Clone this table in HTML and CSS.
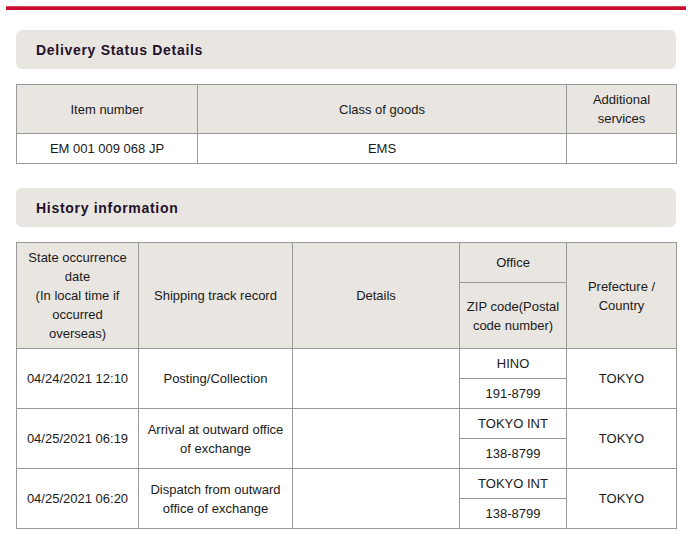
FILE: index.html
```html
<!DOCTYPE html>
<html lang="en">
<head>
<meta charset="utf-8">
<title>Delivery Status Details</title>
<link rel="stylesheet" href="styles.css">
</head>
<body>
<div class="topbar"></div>
<main class="content">
  <h2 class="section-title">Delivery Status Details</h2>
  <table class="grid grid-summary">
    <colgroup>
      <col class="s1"><col class="s2"><col class="s3">
    </colgroup>
    <tr class="h49">
      <th>Item number</th>
      <th>Class of goods</th>
      <th>Additional<br>services</th>
    </tr>
    <tr class="h30">
      <td>EM 001 009 068 JP</td>
      <td>EMS</td>
      <td></td>
    </tr>
  </table>

  <h2 class="section-title section-gap">History information</h2>
  <table class="grid grid-history">
    <colgroup>
      <col class="w1"><col class="w2"><col class="w3"><col class="w4"><col class="w5">
    </colgroup>
    <tr class="h40">
      <th rowspan="2" class="pad">State occurrence date<br>(In local time if occurred overseas)</th>
      <th rowspan="2">Shipping track record</th>
      <th rowspan="2">Details</th>
      <th>Office</th>
      <th rowspan="2" class="pad">Prefecture / Country</th>
    </tr>
    <tr class="h66">
      <th class="pad">ZIP code(Postal code number)</th>
    </tr>
    <tr class="h30">
      <td rowspan="2">04/24/2021 12:10</td>
      <td rowspan="2">Posting/Collection</td>
      <td rowspan="2"></td>
      <td>HINO</td>
      <td rowspan="2">TOKYO</td>
    </tr>
    <tr class="h30"><td>191-8799</td></tr>
    <tr class="h30">
      <td rowspan="2">04/25/2021 06:19</td>
      <td rowspan="2" class="pad">Arrival at outward office of exchange</td>
      <td rowspan="2"></td>
      <td>TOKYO INT</td>
      <td rowspan="2">TOKYO</td>
    </tr>
    <tr class="h30"><td>138-8799</td></tr>
    <tr class="h30">
      <td rowspan="2">04/25/2021 06:20</td>
      <td rowspan="2" class="pad">Dispatch from outward office of exchange</td>
      <td rowspan="2"></td>
      <td>TOKYO INT</td>
      <td rowspan="2">TOKYO</td>
    </tr>
    <tr class="h30"><td>138-8799</td></tr>
  </table>
</main>
</body>
</html>
```

FILE: styles.css
```css
html, body {
  margin: 0;
  padding: 0;
  background: #ffffff;
}

body {
  font-family: "Liberation Sans", Arial, sans-serif;
  font-size: 13px;
  color: #1a1a1a;
}

.topbar {
  margin: 6px 7px 0 6px;
  height: 4px;
  background: linear-gradient(#e2455e 0, #e2455e 1px, #c8102e 1px, #c8102e 100%);
}

.content {
  padding: 20px 17px 20px 16px;
}

.section-title {
  margin: 0;
  height: 39px;
  box-sizing: border-box;
  padding: 0 20px;
  display: flex;
  align-items: center;
  background: #e9e5e1;
  border-radius: 6px;
  font-size: 14px;
  font-weight: bold;
  letter-spacing: 0.7px;
  color: #22112a;
}

.section-gap {
  margin-top: 24px;
}

.grid {
  margin-top: 15px;
  width: 660px;
  border-collapse: collapse;
  table-layout: fixed;
}

.grid th,
.grid td {
  border: 1px solid #999999;
  padding: 0;
  text-align: center;
  vertical-align: middle;
  line-height: 19px;
  font-weight: normal;
}

.grid th {
  background: #e9e5e1;
}

.grid td {
  background: #ffffff;
}

.grid .pad {
  padding: 0 6px;
}

.s1 { width: 181px; }
.s2 { width: 369px; }
.s3 { width: 110px; }

.w1 { width: 122px; }
.w2 { width: 154px; }
.w3 { width: 167px; }
.w4 { width: 107px; }
.w5 { width: 110px; }

.h49 { height: 49px; }
.h30 { height: 30px; }
.h40 { height: 40px; }
.h66 { height: 66px; }
```
